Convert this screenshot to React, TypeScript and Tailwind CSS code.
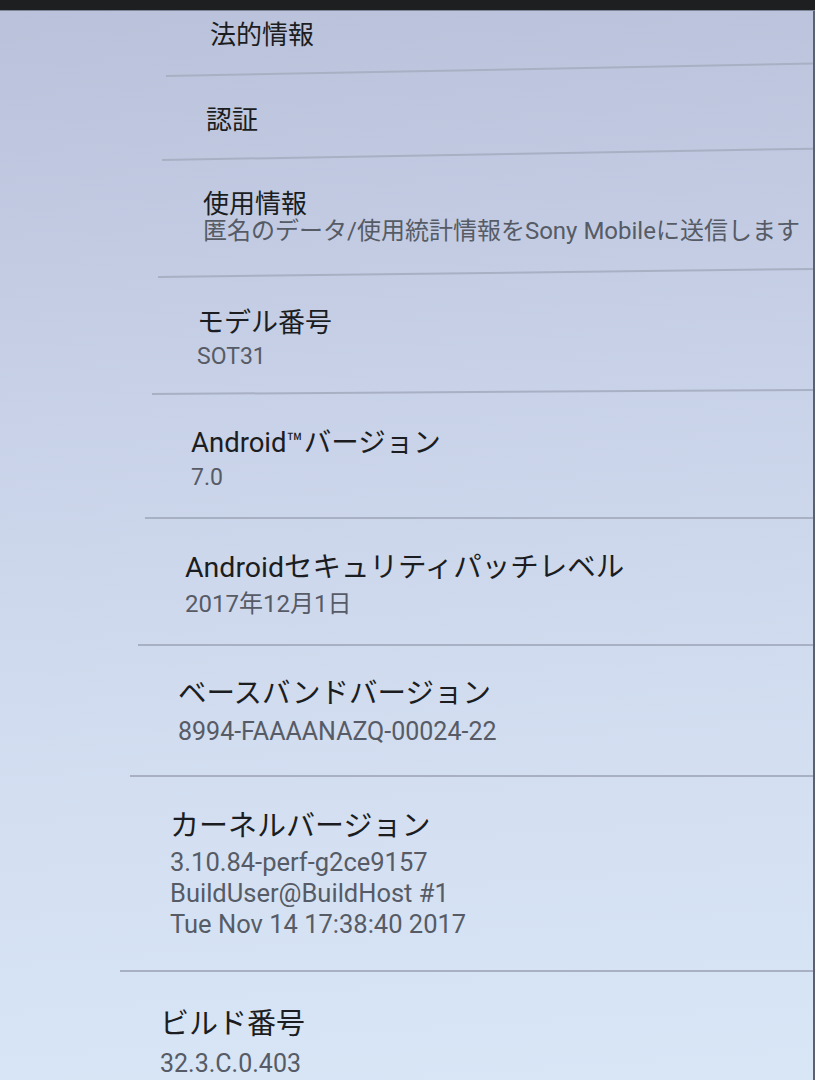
import React from "react";

type Row = {
  title: string;
  subs?: string[];
  row: string;
  title_cls: string;
  sub_cls?: string;
  divider?: string;
};

const rows: Row[] = [
  {
    title: "法的情報",
    row: "h-[64px] pl-[210px] pt-[9px]",
    title_cls: "text-[26px] leading-[30px]",
    divider: "ml-[166px] -rotate-[1.1deg]",
  },
  {
    title: "認証",
    row: "h-[82px] pl-[206px] pt-[28px]",
    title_cls: "text-[26px] leading-[30px]",
    divider: "ml-[162px] -rotate-[1deg]",
  },
  {
    title: "使用情報",
    subs: ["匿名のデータ/使用統計情報をSony Mobileに送信します"],
    row: "h-[115px] pl-[203px] pt-[30px]",
    title_cls: "text-[26px] leading-[27px]",
    sub_cls: "text-[24px] leading-[27px]",
    divider: "ml-[158px] -rotate-[0.7deg]",
  },
  {
    title: "モデル番号",
    subs: ["SOT31"],
    row: "h-[115px] pl-[197px] pt-[29px]",
    title_cls: "text-[27px] leading-[33px]",
    sub_cls: "text-[23px] leading-[33px]",
    divider: "ml-[152px] -rotate-[0.35deg]",
  },
  {
    title: "Android™バージョン",
    subs: ["7.0"],
    row: "h-[122px] pl-[191px] pt-[30px]",
    title_cls: "text-[27.5px] leading-[35px]",
    sub_cls: "text-[23px] leading-[35px]",
    divider: "ml-[145px]",
  },
  {
    title: "Androidセキュリティパッチレベル",
    subs: ["2017年12月1日"],
    row: "h-[125px] pl-[185px] pt-[31px]",
    title_cls: "text-[28.5px] leading-[36px]",
    sub_cls: "text-[24px] leading-[36px]",
    divider: "ml-[138px]",
  },
  {
    title: "ベースバンドバージョン",
    subs: ["8994-FAAAANAZQ-00024-22"],
    row: "h-[129px] pl-[178px] pt-[29px]",
    title_cls: "text-[28.5px] leading-[38px]",
    sub_cls: "text-[25px] leading-[38px]",
    divider: "ml-[130px]",
  },
  {
    title: "カーネルバージョン",
    subs: [
      "3.10.84-perf-g2ce9157",
      "BuildUser@BuildHost #1",
      "Tue Nov 14 17:38:40 2017",
    ],
    row: "h-[193px] pl-[170px] pt-[28px]",
    title_cls: "text-[29px] leading-[42px]",
    sub_cls: "text-[25.5px] leading-[31px]",
    divider: "ml-[120px]",
  },
  {
    title: "ビルド番号",
    subs: ["32.3.C.0.403"],
    row: "h-[108px] pl-[160px] pt-[32px]",
    title_cls: "text-[29px] leading-[40px]",
    sub_cls: "text-[25px] leading-[40px]",
  },
];

export default function App() {
  return (
    <div className="w-[815px] h-[1080px] overflow-hidden flex flex-col font-[Roboto,'Noto_Sans_CJK_JP',sans-serif] bg-[linear-gradient(176deg,#b9c2da_0%,#c3cce3_25%,#cdd7ec_50%,#d4e0f2_75%,#d8e6f6_100%)]">
      <div className="h-[11px] shrink-0 bg-[#1e1f21] border-b border-[#7d8699]" />
      <div className="flex-1 flex flex-col border-r-2 border-[#5c6170]">
        {rows.map((r, i) => (
          <React.Fragment key={i}>
            <div className={`shrink-0 flex flex-col ${r.row}`}>
              <div className={`text-[#1b1d21] whitespace-nowrap ${r.title_cls}`}>
                {r.title}
              </div>
              {r.subs?.map((s, j) => (
                <div
                  key={j}
                  className={`text-[#565b65] whitespace-nowrap ${r.sub_cls}`}
                >
                  {s}
                </div>
              ))}
            </div>
            {r.divider && (
              <div
                className={`shrink-0 h-[2px] origin-left bg-[#a8b0c4] ${r.divider}`}
              />
            )}
          </React.Fragment>
        ))}
      </div>
    </div>
  );
}
